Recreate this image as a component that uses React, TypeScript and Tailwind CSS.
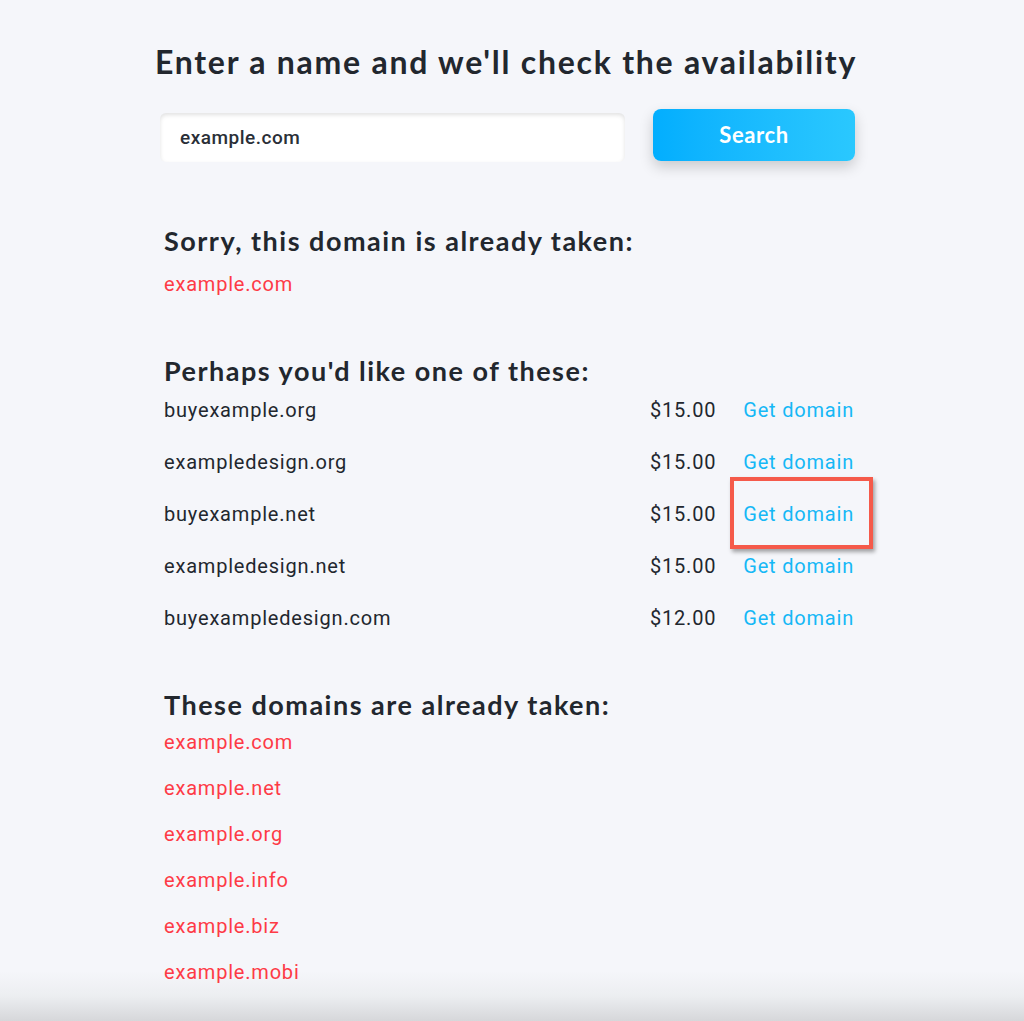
const suggestions = [
  { name: "buyexample.org", price: "$15.00" },
  { name: "exampledesign.org", price: "$15.00" },
  { name: "buyexample.net", price: "$15.00", marked: true },
  { name: "exampledesign.net", price: "$15.00" },
  { name: "buyexampledesign.com", price: "$12.00" },
];

const taken = ["example.com", "example.net", "example.org", "example.info", "example.biz", "example.mobi"];

const heading = { fontFamily: "Lato, 'Noto Sans', sans-serif" };

export default function App() {
  return (
    <div
      className="relative min-h-[1021px] bg-[#f5f6fa] text-[#22272e] overflow-hidden"
      style={{ fontFamily: "Roboto, 'Liberation Sans', sans-serif" }}
    >
      <div className="pointer-events-none absolute inset-x-0 bottom-0 h-[50px] bg-gradient-to-b from-transparent via-[#eceef1] to-[#d6d7da]" />
      <div className="relative mx-auto w-[704px] pt-[42px]">
        <h1
          className="-mx-[20px] whitespace-nowrap pr-[12px] text-center text-[32px] font-bold tracking-[1.75px] leading-[40px]"
          style={heading}
        >
          Enter a name and we'll check the availability
        </h1>

        <div className="mt-[31px] flex items-center">
          <div className="flex h-[49px] w-[465px] items-center rounded-md bg-white pl-[20px] pt-[2px] text-[19px] font-medium tracking-[0.5px] text-[#2a2f37] shadow-[inset_0_2px_4px_rgba(0,0,0,0.12)]">
            example.com
          </div>
          <button
            className="ml-auto mr-[9px] -mt-[6px] h-[52px] w-[202px] rounded-lg bg-gradient-to-r from-[#02aefe] to-[#2ac8fe] text-[22px] font-bold tracking-[0.6px] text-white shadow-[0_6px_14px_rgba(0,0,0,0.18)]"
            style={heading}
          >
            Search
          </button>
        </div>

        <div className="pl-[4px]">
          <h2 className="mt-[62px] text-[27px] font-bold leading-[34px] tracking-[1.5px]" style={heading}>
            Sorry, this domain is already taken:
          </h2>
          <p className="mt-[11px] text-[20px] leading-[30px] tracking-[0.8px] text-[#fe3a46]">example.com</p>

          <h2 className="mt-[55px] text-[27px] font-bold leading-[34px] tracking-[1.5px]" style={heading}>
            Perhaps you'd like one of these:
          </h2>
          <ul className="-mt-[4px]">
            {suggestions.map((s) => (
              <li key={s.name} className="flex h-[52px] items-center text-[20px] tracking-[0.8px]">
                <span className="flex-1">{s.name}</span>
                <span className="w-[100px] text-right">{s.price}</span>
                <span className="relative ml-[27px] mr-[10px] inline-block leading-[28px] text-[#16b8f6]">
                  Get domain
                  {s.marked && (
                    <span className="absolute -left-[13px] -right-[19px] -top-[23px] -bottom-[21px] border-[4px] border-[#f55a4a] shadow-[2px_3px_4px_rgba(0,0,0,0.35)]" />
                  )}
                </span>
              </li>
            ))}
          </ul>

          <h2 className="mt-[44px] text-[27px] font-bold leading-[34px] tracking-[1.5px]" style={heading}>
            These domains are already taken:
          </h2>
          <ul className="-mt-[3px]">
            {taken.map((t) => (
              <li key={t} className="flex h-[46px] items-center text-[20px] tracking-[0.8px] text-[#fe3a46]">
                {t}
              </li>
            ))}
          </ul>
        </div>
      </div>
    </div>
  );
}
